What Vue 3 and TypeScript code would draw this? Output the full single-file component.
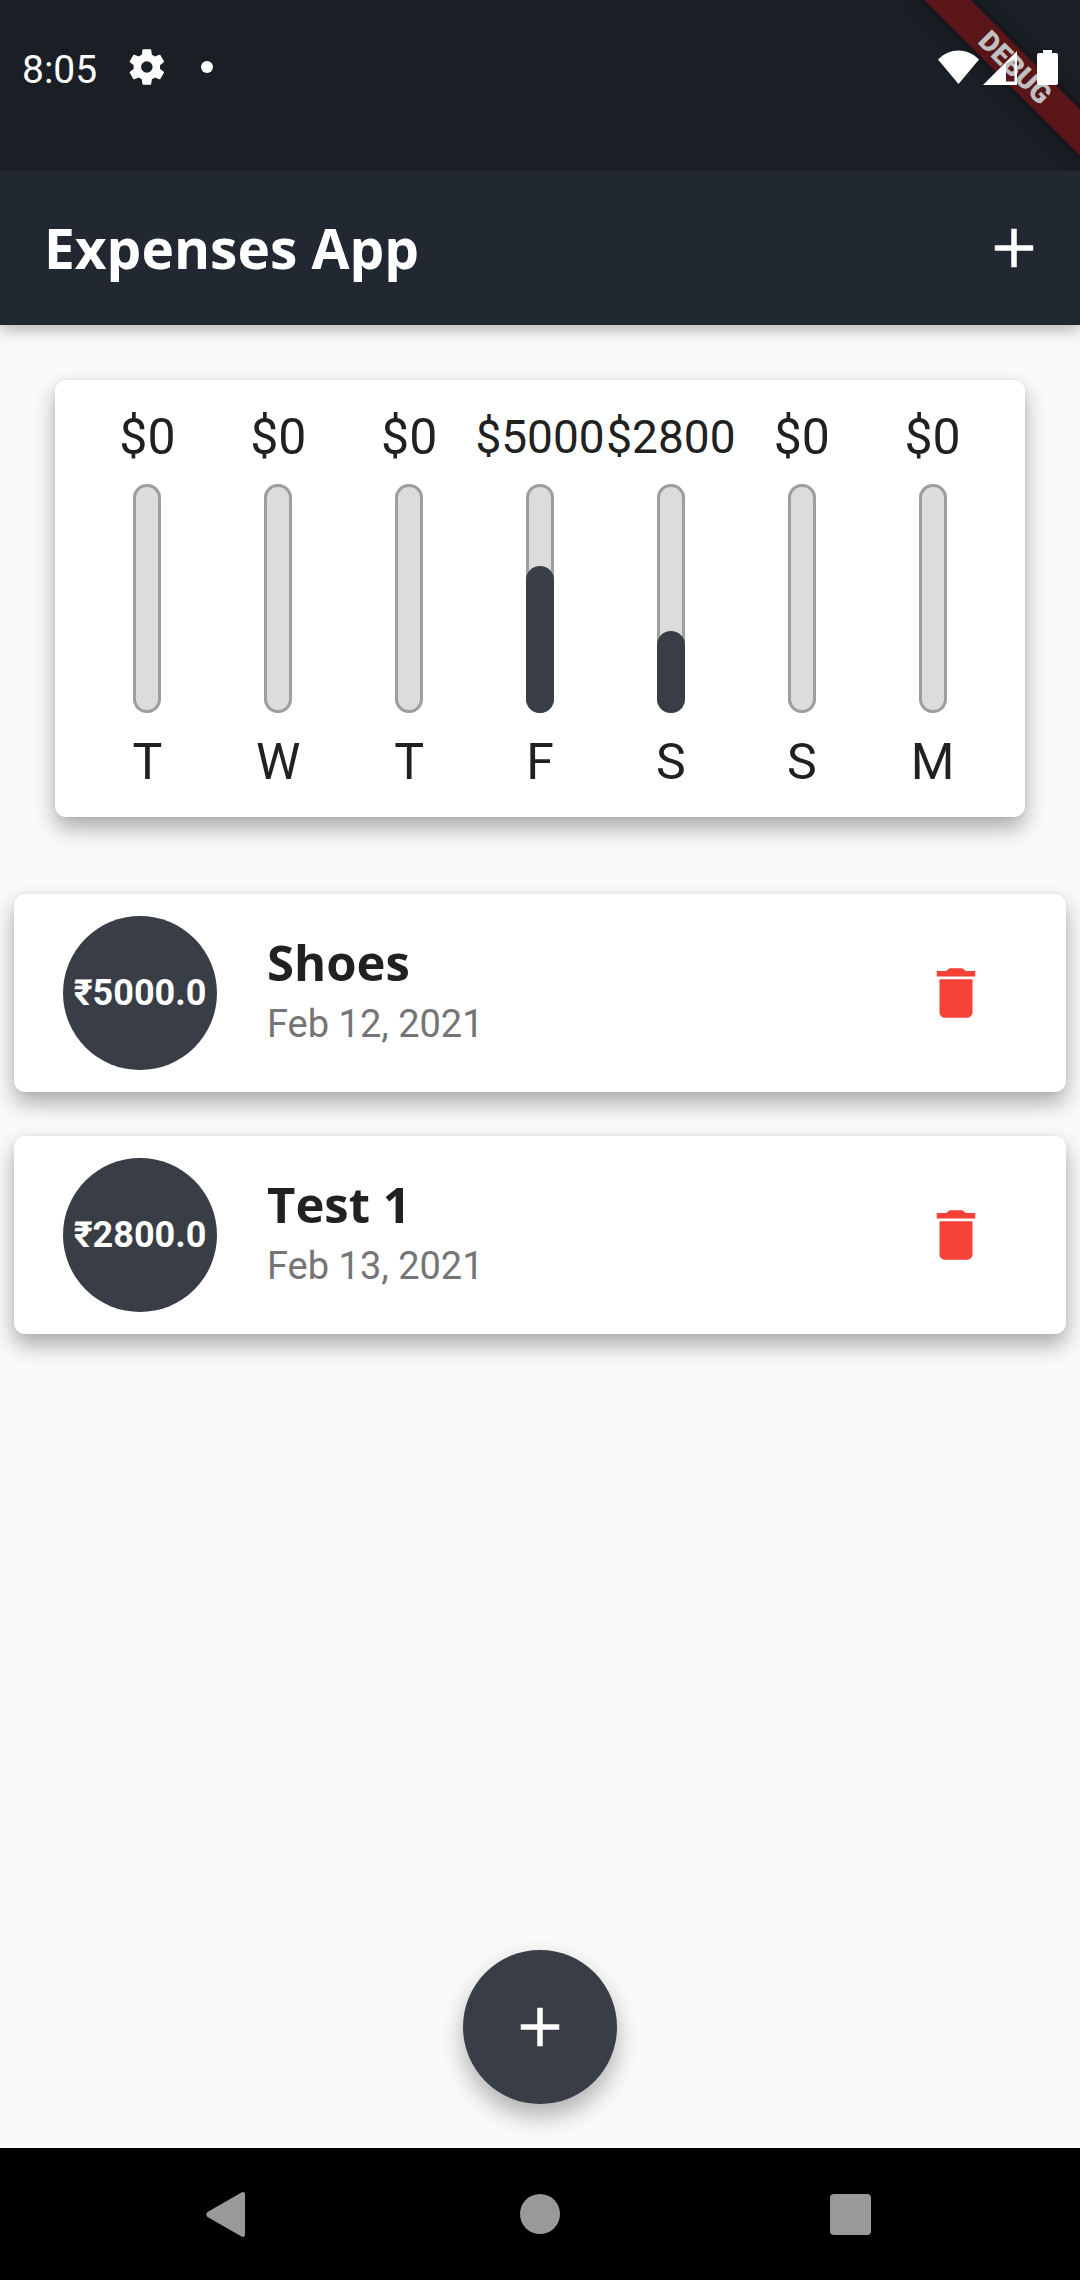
<script setup lang="ts">
interface Day {
  id: number
  label: string
  amount: number
}

interface Transaction {
  id: number
  title: string
  amount: string
  date: string
}

const days: Day[] = [
  { id: 1, label: 'T', amount: 0 },
  { id: 2, label: 'W', amount: 0 },
  { id: 3, label: 'T', amount: 0 },
  { id: 4, label: 'F', amount: 5000 },
  { id: 5, label: 'S', amount: 2800 },
  { id: 6, label: 'S', amount: 0 },
  { id: 7, label: 'M', amount: 0 },
]

const total = days.reduce((sum, day) => sum + day.amount, 0)

const share = (amount: number): string => `${(amount / total) * 100}%`

const transactions: Transaction[] = [
  { id: 1, title: 'Shoes', amount: '₹5000.0', date: 'Feb 12, 2021' },
  { id: 2, title: 'Test 1', amount: '₹2800.0', date: 'Feb 13, 2021' },
]
</script>

<template>
  <div class="screen">
    <div class="status-bar">
      <div class="ribbon-corner">
        <div class="ribbon">DEBUG</div>
      </div>
      <div class="status-left">
        <time class="clock">8:05</time>
        <svg class="gear" viewBox="0 0 24 24" aria-hidden="true">
          <path
            d="M19.4 13c.04-.32.07-.66.07-1s-.03-.68-.07-1l2.15-1.66c.2-.15.25-.42.12-.64l-2.03-3.5c-.13-.22-.39-.3-.61-.22l-2.53 1.02c-.53-.4-1.1-.74-1.72-1l-.38-2.68A.5.5 0 0 0 13.9 1.9h-4a.5.5 0 0 0-.5.42L9.03 5c-.62.26-1.19.6-1.72 1L4.78 4.98c-.23-.09-.49 0-.61.22l-2.03 3.5c-.13.22-.07.49.12.64L4.4 11c-.04.32-.07.66-.07 1s.03.68.07 1l-2.14 1.66c-.2.15-.25.42-.12.64l2.03 3.5c.13.22.39.3.61.22l2.53-1.02c.53.4 1.1.74 1.72 1l.37 2.68c.04.24.25.42.5.42h4a.5.5 0 0 0 .5-.42l.38-2.68c.62-.26 1.19-.6 1.72-1l2.53 1.02c.23.09.49 0 .61-.22l2.03-3.5c.13-.22.07-.49-.12-.64zM11.9 15.3a3.3 3.3 0 1 1 0-6.6 3.3 3.3 0 0 1 0 6.6z"
          />
        </svg>
        <span class="dot"></span>
      </div>
      <svg class="status-icons" viewBox="0 0 120 36" aria-hidden="true">
        <path d="M0 9.5C12-2.5 29-2.5 41 9.5L20.5 34z" />
        <path fill-rule="evenodd" d="M45 35 79 1v34zM68 13.5v18h8.5V9z" />
        <path d="M105 0h9v3h4a2 2 0 0 1 2 2v28a2 2 0 0 1-2 2h-17a2 2 0 0 1-2-2V5a2 2 0 0 1 2-2h4z" />
      </svg>
    </div>

    <header class="app-bar">
      <h1>Expenses App</h1>
      <button type="button" class="icon-button" aria-label="Add expense">
        <svg class="icon" viewBox="0 0 24 24"><path d="M19 13h-6v6h-2v-6H5v-2h6V5h2v6h6v2z" /></svg>
      </button>
    </header>

    <main>
      <section class="card chart" aria-label="Spending this week">
        <div v-for="day in days" :key="day.id" class="day">
          <span class="spent" :class="{ fitted: day.amount > 999 }">${{ day.amount }}</span>
          <div class="track">
            <div v-if="day.amount" class="fill" :style="{ height: share(day.amount) }"></div>
          </div>
          <span class="day-label">{{ day.label }}</span>
        </div>
      </section>

      <ul class="transactions">
        <li v-for="item in transactions" :key="item.id" class="card transaction">
          <span class="amount">{{ item.amount }}</span>
          <div class="details">
            <h2>{{ item.title }}</h2>
            <p>{{ item.date }}</p>
          </div>
          <button type="button" class="icon-button delete" :aria-label="`Delete ${item.title}`">
            <svg class="icon" viewBox="0 0 24 24">
              <path
                d="M6 19c0 1.1.9 2 2 2h8c1.1 0 2-.9 2-2V7H6v12zM19 4h-3.5l-.7-.7a1 1 0 0 0-.7-.3H9.9a1 1 0 0 0-.7.3l-.7.7H5v2h14V4z"
              />
            </svg>
          </button>
        </li>
      </ul>

      <button type="button" class="fab" aria-label="Add new expense">
        <svg class="icon" viewBox="0 0 24 24"><path d="M19 13h-6v6h-2v-6H5v-2h6V5h2v6h6v2z" /></svg>
      </button>
    </main>

    <nav class="system-nav" aria-label="System">
      <button type="button" aria-label="Back">
        <svg viewBox="0 0 66 66"><path d="M11.5 31 45.5 11.5Q49 10 49 14V53Q49 57 45.5 55.5L11.5 36Q9 33.5 11.5 31z" /></svg>
      </button>
      <button type="button" aria-label="Home">
        <svg viewBox="0 0 66 66"><circle cx="33" cy="33" r="20" /></svg>
      </button>
      <button type="button" aria-label="Recent apps">
        <svg viewBox="0 0 66 66"><rect x="12" y="13" width="41" height="41" rx="4" /></svg>
      </button>
    </nav>
  </div>
</template>

<style>
body {
  margin: 0;
  background: #fafafa;
}
</style>

<style scoped>
.screen {
  display: flex;
  flex-direction: column;
  min-height: 100vh;
  overflow-x: hidden;
  background: #fafafa;
  color: #212121;
  font-family: Roboto, sans-serif;
}

h1,
h2,
p,
ul {
  margin: 0;
  padding: 0;
}

button {
  display: flex;
  align-items: center;
  justify-content: center;
  padding: 0;
  border: 0;
  background: none;
  color: inherit;
  cursor: pointer;
}

svg {
  display: block;
  fill: currentColor;
}

.icon {
  width: 66px;
  height: 66px;
}

.icon-button {
  width: 132px;
  height: 132px;
}

.status-bar {
  position: relative;
  z-index: 2;
  display: flex;
  align-items: flex-start;
  justify-content: space-between;
  box-sizing: border-box;
  height: 171px;
  padding: 43px 22px 0;
  background: #1a1e25;
  color: #fff;
}

.status-left,
.status-icons {
  position: relative;
}

.status-left {
  display: flex;
  align-items: center;
  height: 48px;
}

.clock {
  padding-top: 6px;
  font-size: 39px;
  line-height: 48px;
}

.gear {
  width: 42px;
  height: 42px;
  margin-left: 29px;
}

.dot {
  width: 12px;
  height: 12px;
  margin-left: 33px;
  border-radius: 50%;
  background: #fff;
}

.status-icons {
  width: 120px;
  height: 36px;
  margin-top: 7px;
}

.ribbon-corner {
  position: absolute;
  top: 0;
  right: 0;
  width: 180px;
  height: 171px;
  overflow: hidden;
}

.ribbon {
  position: absolute;
  top: 50px;
  left: -6px;
  box-sizing: border-box;
  width: 240px;
  height: 33px;
  padding-left: 3px;
  background: #5a1518;
  box-shadow: 0 0 16px rgba(0, 0, 0, 0.5);
  color: #c0c0c0;
  font-size: 28px;
  font-weight: 900;
  line-height: 33px;
  text-align: center;
  transform: rotate(45deg);
}

.app-bar {
  position: relative;
  z-index: 1;
  display: flex;
  align-items: center;
  justify-content: space-between;
  height: 154px;
  padding-left: 44px;
  background: #222831;
  box-shadow: 0 5px 14px rgba(0, 0, 0, 0.28);
  color: #fff;
}

h1 {
  font: 700 55px/76px 'Open Sans', sans-serif;
}

main {
  display: flex;
  flex: 1;
  flex-direction: column;
  padding: 55px 14px 44px;
}

.card {
  border-radius: 11px;
  background: #fff;
  box-shadow:
    0 11px 22px rgba(0, 0, 0, 0.32),
    0 0 5px rgba(0, 0, 0, 0.06);
}

.chart {
  display: flex;
  margin: 0 41px;
  padding: 27px;
}

.day {
  display: flex;
  flex: 1 1 0;
  flex-direction: column;
  align-items: center;
  min-width: 0;
  font-size: 50px;
  line-height: 55px;
  white-space: nowrap;
}

.spent {
  padding-top: 3px;
}

.fitted {
  font-size: 46px;
}

.track {
  display: flex;
  align-items: flex-end;
  width: 28px;
  height: 229px;
  margin: 19px 0 22px;
  border-radius: 14px;
  background: #dcdcdc;
  box-shadow: inset 0 0 0 3px #9e9e9e;
}

.fill {
  width: 100%;
  border-radius: 14px;
  background: #393e46;
}

.transactions {
  display: flex;
  flex-direction: column;
  gap: 44px;
  margin-top: 77px;
  list-style: none;
}

.transaction {
  display: flex;
  align-items: center;
  padding: 22px 44px 22px 49px;
}

.delete {
  color: #f44336;
}

.amount {
  display: flex;
  flex: none;
  align-items: center;
  justify-content: center;
  width: 154px;
  height: 154px;
  border-radius: 50%;
  background: #393e46;
  color: #fff;
  font-size: 36px;
  font-weight: 700;
}

.details {
  flex: 1;
  padding-bottom: 2px;
  margin-left: 50px;
}

h2 {
  font: 700 49px/64px 'Open Sans', sans-serif;
}

.details p {
  color: #757575;
  font-size: 38px;
  line-height: 60px;
}

.fab {
  width: 154px;
  height: 154px;
  margin: auto auto 0;
  border-radius: 50%;
  background: #393e46;
  box-shadow: 0 12px 24px rgba(0, 0, 0, 0.3);
  color: #fff;
}

.system-nav {
  display: flex;
  justify-content: center;
  gap: 179px;
  height: 132px;
  background: #000;
  color: #999;
}

.system-nav button {
  width: 132px;
  height: 132px;
}

.system-nav svg {
  width: 66px;
  height: 66px;
}
</style>
